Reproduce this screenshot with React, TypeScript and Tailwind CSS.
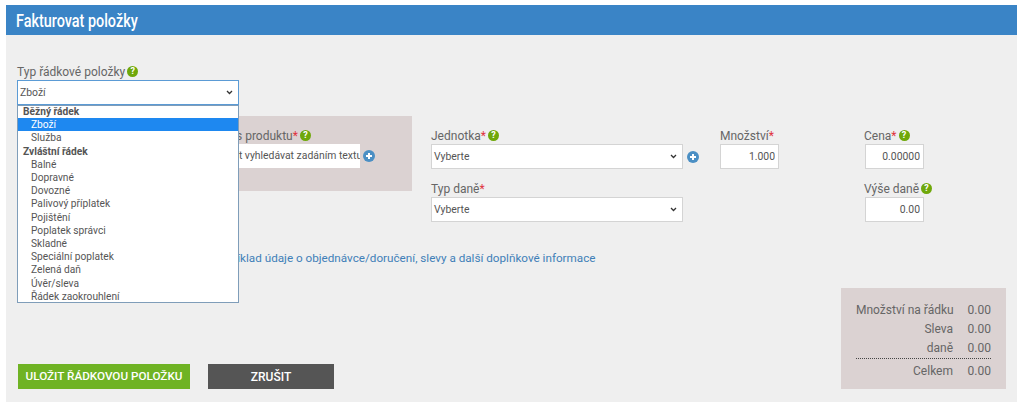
import React from "react";

const groups = [
  { title: "Běžný řádek", items: ["Zboží", "Služba"] },
  {
    title: "Zvláštní řádek",
    items: [
      "Balné",
      "Dopravné",
      "Dovozné",
      "Palivový příplatek",
      "Pojištění",
      "Poplatek správci",
      "Skladné",
      "Speciální poplatek",
      "Zelená daň",
      "Úvěr/sleva",
      "Řádek zaokrouhlení",
    ],
  },
];

function Help() {
  return (
    <span className="ml-[2px] flex h-[11px] w-[11px] items-center justify-center rounded-full bg-[#6fa80a] text-[9px] leading-none font-bold text-white">
      ?
    </span>
  );
}

function Plus() {
  return (
    <svg width="12" height="12" viewBox="0 0 12 12" className="shrink-0">
      <circle cx="6" cy="6" r="6" fill="#4b8fc4" />
      <path d="M6 3v6M3 6h6" stroke="#fff" strokeWidth="2" />
    </svg>
  );
}

function Req() {
  return <span className="text-[#e0343f]">*</span>;
}

function Chevron() {
  return (
    <svg width="7" height="5" viewBox="0 0 7 5">
      <path d="M1 1l2.5 2.5L6 1" fill="none" stroke="#333" strokeWidth="1.3" />
    </svg>
  );
}

function Label({ children, className = "" }: { children: React.ReactNode; className?: string }) {
  return <div className={`flex h-[17px] items-center whitespace-nowrap ${className}`}>{children}</div>;
}

function Sel({ value }: { value: string }) {
  return (
    <div className="flex h-[25px] w-[252px] items-center justify-between border border-[#d4d4d4] bg-white pr-[5px] pl-[2px] text-[10.4px] text-[#555]">
      {value}
      <Chevron />
    </div>
  );
}

function Num({ value, className = "" }: { value: string; className?: string }) {
  return (
    <input
      readOnly
      value={value}
      className={`block h-[25px] w-[59px] border border-[#d4d4d4] bg-white pr-[3px] text-right text-[10.4px] text-[#555] ${className}`}
    />
  );
}

function SumRow({ label, value }: { label: string; value: string }) {
  return (
    <div className="flex h-[19px] items-center justify-end whitespace-nowrap">
      <span>{label}</span>
      <span className="w-[38px] text-right">{value}</span>
    </div>
  );
}

export default function App() {
  return (
    <div className="h-[406px] bg-white pt-[5px] pl-[6px] font-['Roboto',sans-serif] text-[12px] text-[#666]">
      <div className="w-[1011px]">
        <div className="flex h-[30px] items-center bg-[#3a84c6] pl-[10px]">
          <h1 className="origin-left scale-x-[0.8] text-[18px] font-medium whitespace-nowrap text-white">
            Fakturovat položky
          </h1>
        </div>
        <div className="h-[367px] bg-[#efefef] pt-[28px] pl-[11px]">
          <div className="relative h-[45px] w-[222px]">
            <Label>
              Typ řádkové položky
              <Help />
            </Label>
            <div className="flex h-[25px] items-center justify-between border border-[#5b9bd5] bg-white pr-[5px] pl-[2px] text-[10.4px] text-[#555]">
              Zboží
              <Chevron />
            </div>
            <div className="absolute top-[42px] left-0 z-10 h-[198px] w-[222px] overflow-hidden border border-[#7f9db9] bg-white text-[10.2px] leading-[13.2px] text-[#555]">
              <div className="-mt-[1px]">
                {groups.map((g) => (
                  <div key={g.title}>
                    <div className="pl-[5px] font-bold">{g.title}</div>
                    {g.items.map((item) => (
                      <div
                        key={item}
                        className={
                          item === "Zboží"
                            ? "bg-[#1e88f0] pl-[13px] text-white"
                            : "pl-[13px]"
                        }
                      >
                        {item}
                      </div>
                    ))}
                  </div>
                ))}
              </div>
            </div>
          </div>

          <div className="mt-[8px] flex">
            <div className="h-[75px] w-[395px] bg-[#dbd2d2] pt-[11px] pl-[195px]">
              <Label>
                Popis produktu
                <Req />
                <Help />
              </Label>
              <div className="flex items-center gap-[3px]">
                <div className="flex h-[24px] w-[148px] items-center overflow-hidden bg-white pl-[7px] text-[10.4px] whitespace-nowrap text-[#555]">
                  Začít vyhledávat zadáním textu
                </div>
                <Plus />
              </div>
            </div>

            <div className="ml-[19px] w-[289px] pt-[11px]">
              <Label>
                Jednotka
                <Req />
                <Help />
              </Label>
              <div className="flex items-center gap-[4px]">
                <Sel value="Vyberte" />
                <Plus />
              </div>
              <Label className="mt-[11px]">
                Typ daně
                <Req />
              </Label>
              <Sel value="Vyberte" />
            </div>

            <div className="w-[144px] pt-[11px]">
              <Label>
                Množství
                <Req />
              </Label>
              <Num value="1.000" />
            </div>

            <div className="pt-[11px]">
              <Label>
                Cena
                <Req />
                <Help />
              </Label>
              <Num value="0.00000" className="ml-[1px]" />
              <Label className="mt-[11px]">
                Výše daně
                <Help />
              </Label>
              <Num value="0.00" className="ml-[1px]" />
            </div>
          </div>

          <div className="mt-[28px] h-[16px] pl-[163px] text-[11.7px] leading-[16px] whitespace-nowrap text-[#3f7fb8]">
            Přidat například údaje o objednávce/doručení, slevy a další doplňkové informace
          </div>

          <div className="mt-[22px] flex items-end justify-between">
            <div className="flex gap-[18px] pl-[1px]">
              <button className="h-[25px] w-[172px] bg-[#6fb324] text-[11.7px] font-medium text-white">
                ULOŽIT ŘÁDKOVOU POLOŽKU
              </button>
              <button className="h-[25px] w-[126px] bg-[#555] text-[12px] font-medium text-white">
                ZRUŠIT
              </button>
            </div>
            <div className="mr-[11px] h-[101px] w-[165px] bg-[#dbd2d2] px-[15px] pt-[12px]">
              <SumRow label="Množství na řádku" value="0.00" />
              <SumRow label="Sleva" value="0.00" />
              <SumRow label="daně" value="0.00" />
              <div className="mt-[1px] border-t border-dotted border-[#444] pt-[2px]">
                <SumRow label="Celkem" value="0.00" />
              </div>
            </div>
          </div>
        </div>
      </div>
    </div>
  );
}
